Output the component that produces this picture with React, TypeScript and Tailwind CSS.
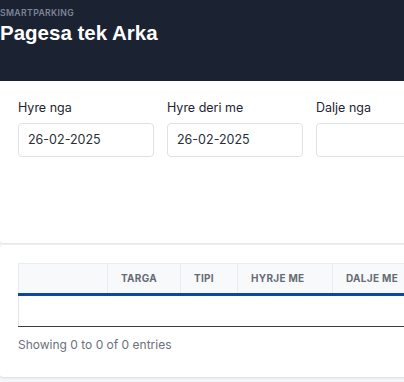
import React from "react";

const columns = ["", "TARGA", "TIPI", "HYRJE ME", "DALJE ME"];
const widths = ["w-[89px]", "w-[73px]", "w-[57px]", "w-[95px]", "w-[140px]"];

function DateField({ label, value }: { label: string; value?: string }) {
  return (
    <div className="flex w-[136px] flex-none flex-col">
      <label className="mb-[5px] text-[12.5px] leading-[20px] text-[#1e2533]">{label}</label>
      <div className="flex h-[34px] items-center rounded-[4px] border border-[#dfe2e7] bg-white px-[9px] text-[12.5px] text-[#2a2f37]">
        {value}
      </div>
    </div>
  );
}

export default function App() {
  return (
    <div className="relative h-[382px] w-[404px] overflow-hidden bg-[#f4f5f8] font-['Inter',sans-serif]">
      <header className="h-[81px] bg-[#1b2333] pt-[8px]">
        <p className="text-[8.7px] font-semibold uppercase leading-[10px] tracking-[0.04em] text-[#7c8595]">SmartParking</p>
        <h1 className="mt-[3px] font-['Liberation_Sans',Arial,sans-serif] text-[20.5px] font-bold leading-[24px] text-white">
          Pagesa tek Arka
        </h1>
      </header>

      <div className="w-[480px]">
        <section className="h-[162px] rounded-bl-[3px] bg-white px-[18px] pt-[17px] shadow-[0_1px_2px_rgba(0,0,0,0.08)]">
          <div className="flex gap-[13px]">
            <DateField label="Hyre nga" value="26-02-2025" />
            <DateField label="Hyre deri me" value="26-02-2025" />
            <DateField label="Dalje nga" />
          </div>
        </section>

        <section className="mt-[2px] h-[132px] rounded-l-[3px] bg-white pl-[18px] pt-[18px] shadow-[0_1px_2px_rgba(0,0,0,0.1)]">
          <table className="border-collapse">
            <thead>
              <tr className="h-[31px] bg-[#f8f9fb]">
                {columns.map((col, i) => (
                  <th
                    key={i}
                    className={`${widths[i]} border-t border-r border-[#e9ecf0] border-b-[3px] border-b-[#0c47a1] px-[13px] text-left text-[10px] font-bold tracking-[0.03em] text-[#656b74] ${i === 0 ? "border-l" : ""}`}
                  >
                    {col}
                  </th>
                ))}
              </tr>
            </thead>
            <tbody>
              <tr className="h-[32px]">
                <td colSpan={5} className="border-l border-b border-l-[#e3e6ea] border-b-[#3a3d42]" />
              </tr>
            </tbody>
          </table>
          <p className="mt-[9px] text-[12px] leading-[18px] text-[#6b717a]">Showing 0 to 0 of 0 entries</p>
        </section>
      </div>
    </div>
  );
}
